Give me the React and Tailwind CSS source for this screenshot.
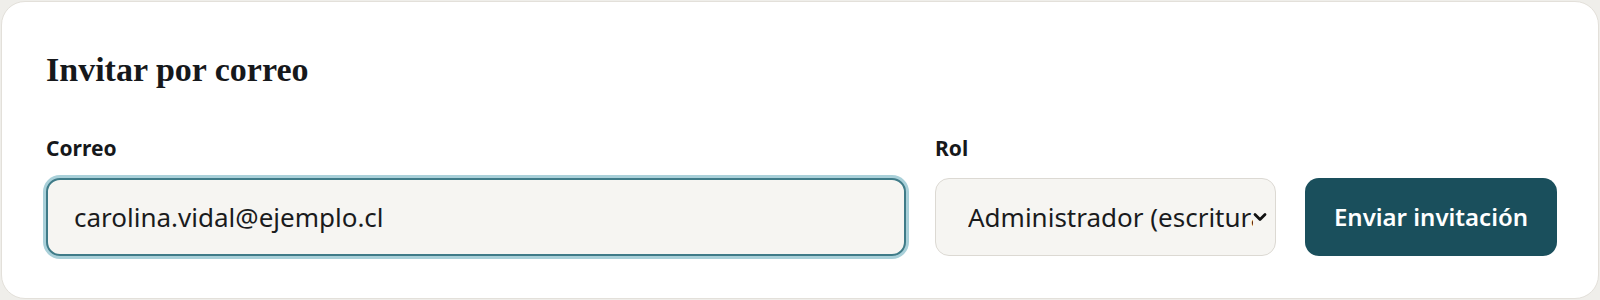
import React from "react";

export default function App() {
  return (
    <div className="min-h-screen bg-[#efeeea] px-px pt-px" style={{ fontFamily: '"Noto Sans", sans-serif' }}>
      <div className="rounded-[24px] border border-[#e3e0da] bg-white pl-[44px] pr-[41px] pt-[47px] pb-[42px]">
        <h2
          className="text-[34px] font-bold leading-[42px] text-[#16181b]"
          style={{ fontFamily: '"Liberation Serif", serif' }}
        >
          Invitar por correo
        </h2>
        <div className="mt-[44px] flex items-end gap-[29px]">
          <div className="flex flex-1 flex-col">
            <label className="text-[21px] font-bold leading-[26px] text-[#16181b]">Correo</label>
            <div className="mt-[17px] flex h-[78px] items-center rounded-[14px] border-2 border-[#3f7b88] bg-[#f6f5f2] px-[26px] shadow-[0_0_0_3px_#a9d0d9]">
              <span className="text-[26px] text-[#1a1b1d]">carolina.vidal@ejemplo.cl</span>
            </div>
          </div>
          <div className="flex w-[341px] flex-col">
            <label className="text-[21px] font-bold leading-[26px] text-[#16181b]">Rol</label>
            <div className="mt-[17px] flex h-[78px] items-center rounded-[14px] border border-[#dcd9d3] bg-[#f6f5f2] pl-[32px] pr-[8px]">
              <span className="flex-1 overflow-hidden whitespace-nowrap text-[26px] text-[#1a1b1d]">
                Administrador (escritura)
              </span>
              <svg width="14" height="10" viewBox="0 0 14 10" className="shrink-0">
                <path d="M2 2.5 L7 7.5 L12 2.5" fill="none" stroke="#111" strokeWidth="2.8" strokeLinecap="round" strokeLinejoin="round" />
              </svg>
            </div>
          </div>
          <button className="flex h-[78px] w-[252px] items-center justify-center rounded-[14px] bg-[#1a4f5c] text-[24px] font-semibold text-white">
            Enviar invitación
          </button>
        </div>
      </div>
    </div>
  );
}
